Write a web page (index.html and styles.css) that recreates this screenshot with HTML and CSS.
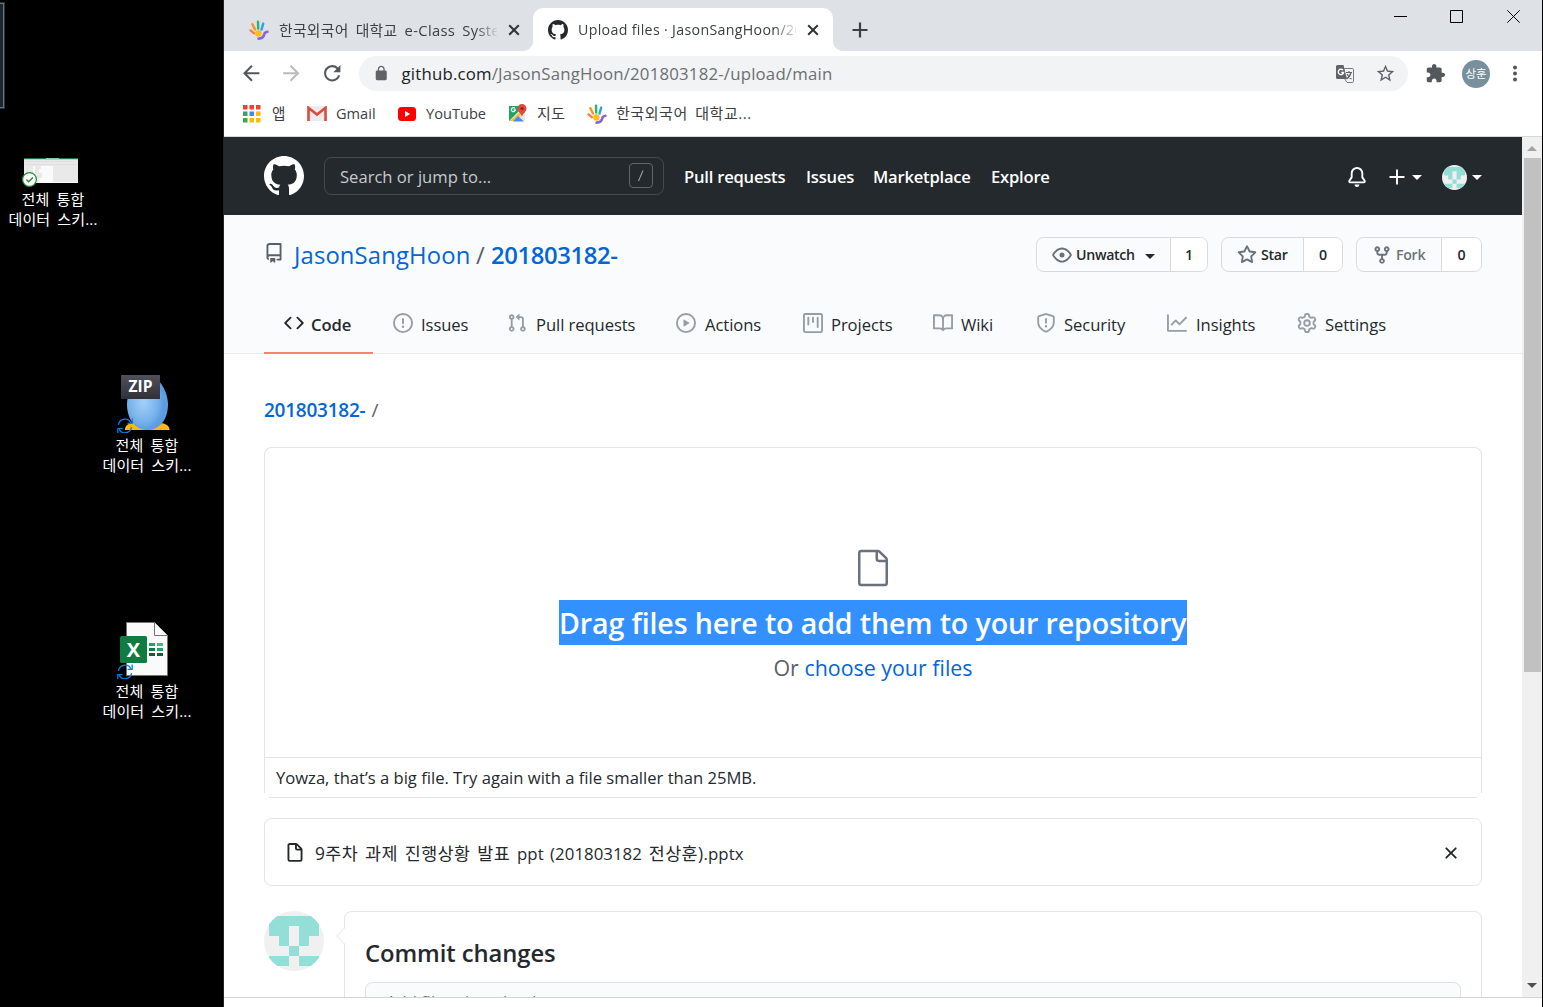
FILE: index.html
```html
<!DOCTYPE html>
<html lang="ko">
<head>
<meta charset="utf-8">
<title>Upload files · JasonSangHoon/201803182-</title>
<link rel="stylesheet" href="styles.css">
</head>
<body>
<svg class="sprite" aria-hidden="true">
  <symbol id="github" viewBox="0 0 16 16"><path fill-rule="evenodd" d="M8 0C3.58 0 0 3.58 0 8c0 3.54 2.29 6.53 5.47 7.59.4.07.55-.17.55-.38 0-.19-.01-.82-.01-1.49-2.01.37-2.53-.49-2.69-.94-.09-.23-.48-.94-.82-1.13-.28-.15-.68-.52-.01-.53.63-.01 1.08.58 1.23.82.72 1.21 1.87.87 2.33.66.07-.52.28-.87.51-1.07-1.78-.2-3.64-.89-3.64-3.95 0-.87.31-1.59.82-2.15-.08-.2-.36-1.02.08-2.12 0 0 .67-.21 2.2.82.64-.18 1.32-.27 2-.27.68 0 1.36.09 2 .27 1.53-1.04 2.2-.82 2.2-.82.44 1.1.16 1.92.08 2.12.51.56.82 1.27.82 2.15 0 3.07-1.87 3.75-3.65 3.95.29.25.54.73.54 1.48 0 1.07-.01 1.93-.01 2.2 0 .21.15.46.55.38A8.013 8.013 0 0016 8c0-4.42-3.58-8-8-8z"/></symbol>
  <symbol id="repo" viewBox="0 0 16 16"><path fill-rule="evenodd" d="M2 2.5A2.5 2.5 0 014.5 0h8.75a.75.75 0 01.75.75v12.5a.75.75 0 01-.75.75h-2.5a.75.75 0 110-1.5h1.75v-2h-8a1 1 0 00-.714 1.7.75.75 0 01-1.072 1.05A2.495 2.495 0 012 11.5v-9zm10.5-1V9h-8c-.356 0-.694.074-1 .208V2.5a1 1 0 011-1h8zM5 12.25v3.25a.25.25 0 00.4.2l1.45-1.087a.25.25 0 01.3 0L8.6 15.7a.25.25 0 00.4-.2v-3.25a.25.25 0 00-.25-.25h-3.5a.25.25 0 00-.25.25z"/></symbol>
  <symbol id="code" viewBox="0 0 16 16"><path fill-rule="evenodd" d="M4.72 3.22a.75.75 0 011.06 1.06L2.06 8l3.72 3.72a.75.75 0 11-1.06 1.06L.47 8.53a.75.75 0 010-1.06l4.25-4.25zm6.56 0a.75.75 0 10-1.06 1.06L13.94 8l-3.72 3.72a.75.75 0 101.06 1.06l4.25-4.25a.75.75 0 000-1.06l-4.25-4.25z"/></symbol>
  <symbol id="issue" viewBox="0 0 16 16"><path fill-rule="evenodd" d="M8 1.5a6.5 6.5 0 100 13 6.5 6.5 0 000-13zM0 8a8 8 0 1116 0A8 8 0 010 8zm9 3a1 1 0 11-2 0 1 1 0 012 0zm-.25-6.25a.75.75 0 00-1.5 0v3.5a.75.75 0 001.5 0v-3.5z"/></symbol>
  <symbol id="pull" viewBox="0 0 16 16"><path fill-rule="evenodd" d="M7.177 3.073L9.573.677A.25.25 0 0110 .854v4.792a.25.25 0 01-.427.177L7.177 3.427a.25.25 0 010-.354zM3.75 2.5a.75.75 0 100 1.5.75.75 0 000-1.5zm-2.25.75a2.25 2.25 0 113 2.122v5.256a2.251 2.251 0 11-1.5 0V5.372A2.25 2.25 0 011.5 3.25zM11 2.5h-1V4h1a1 1 0 011 1v5.628a2.251 2.251 0 101.5 0V5A2.5 2.5 0 0011 2.5zm1 10.25a.75.75 0 111.5 0 .75.75 0 01-1.5 0zM3.75 12a.75.75 0 100 1.5.75.75 0 000-1.5z"/></symbol>
  <symbol id="play" viewBox="0 0 16 16"><path fill-rule="evenodd" d="M1.5 8a6.5 6.5 0 1113 0 6.5 6.5 0 01-13 0zM8 0a8 8 0 100 16A8 8 0 008 0zM6.379 5.227A.25.25 0 006 5.442v5.117a.25.25 0 00.379.214l4.264-2.559a.25.25 0 000-.428L6.379 5.227z"/></symbol>
  <symbol id="project" viewBox="0 0 16 16"><path fill-rule="evenodd" d="M1.75 0A1.75 1.75 0 000 1.75v12.5C0 15.216.784 16 1.75 16h12.5A1.75 1.75 0 0016 14.25V1.75A1.75 1.75 0 0014.25 0H1.75zM1.5 1.75a.25.25 0 01.25-.25h12.5a.25.25 0 01.25.25v12.5a.25.25 0 01-.25.25H1.75a.25.25 0 01-.25-.25V1.75zM11.75 3a.75.75 0 00-.75.75v7.5a.75.75 0 001.5 0v-7.5a.75.75 0 00-.75-.75zm-8.25.75a.75.75 0 011.5 0v5.5a.75.75 0 01-1.5 0v-5.5zM8 3a.75.75 0 00-.75.75v3.5a.75.75 0 001.5 0v-3.5A.75.75 0 008 3z"/></symbol>
  <symbol id="book" viewBox="0 0 16 16"><path fill-rule="evenodd" d="M0 1.75A.75.75 0 01.75 1h4.253c1.227 0 2.317.59 3 1.501A3.744 3.744 0 0111.006 1h4.245a.75.75 0 01.75.75v10.5a.75.75 0 01-.75.75h-4.507a2.25 2.25 0 00-1.591.659l-.622.621a.75.75 0 01-1.06 0l-.622-.621A2.25 2.25 0 005.258 13H.75a.75.75 0 01-.75-.75V1.75zm8.755 3a2.25 2.25 0 012.25-2.25H14.5v9h-3.757c-.71 0-1.4.201-1.992.572l.004-7.322zm-1.504 7.324l.004-5.073-.002-2.253A2.25 2.25 0 005.003 2.5H1.5v9h3.757a3.75 3.75 0 011.994.574z"/></symbol>
  <symbol id="shield" viewBox="0 0 16 16"><path fill-rule="evenodd" d="M7.467.133a1.75 1.75 0 011.066 0l5.25 1.68A1.75 1.75 0 0115 3.48V7c0 1.566-.32 3.182-1.303 4.682-.983 1.498-2.585 2.813-5.032 3.855a1.7 1.7 0 01-1.33 0c-2.447-1.042-4.049-2.357-5.032-3.855C1.32 10.182 1 8.566 1 7V3.48a1.75 1.75 0 011.217-1.667l5.25-1.68zm.61 1.429a.25.25 0 00-.153 0l-5.25 1.68a.25.25 0 00-.174.238V7c0 1.358.275 2.666 1.057 3.86.784 1.194 2.121 2.34 4.366 3.297a.2.2 0 00.154 0c2.245-.956 3.582-2.104 4.366-3.298C13.225 9.666 13.5 8.36 13.5 7V3.48a.25.25 0 00-.174-.237l-5.25-1.68zM9 10.5a1 1 0 11-2 0 1 1 0 012 0zm-.25-5.75a.75.75 0 10-1.5 0v3a.75.75 0 001.5 0v-3z"/></symbol>
  <symbol id="graph" viewBox="0 0 16 16"><path fill-rule="evenodd" d="M1.5 1.75a.75.75 0 00-1.5 0v12.5c0 .414.336.75.75.75h14.5a.75.75 0 000-1.5H1.5V1.75zm14.28 2.53a.75.75 0 00-1.06-1.06L10 7.94 7.53 5.47a.75.75 0 00-1.06 0L3.22 8.72a.75.75 0 001.06 1.06L7 7.06l2.47 2.47a.75.75 0 001.06 0l5.25-5.25z"/></symbol>
  <symbol id="gear" viewBox="0 0 16 16"><path fill-rule="evenodd" d="M7.429 1.525a6.593 6.593 0 011.142 0c.036.003.108.036.137.146l.289 1.105c.147.56.55.967.997 1.189.174.086.341.183.501.29.417.278.97.423 1.53.27l1.102-.303c.11-.03.175.016.195.046.219.31.41.641.573.989.014.031.022.11-.059.19l-.815.806c-.411.406-.562.957-.53 1.456a4.588 4.588 0 010 .582c-.032.499.119 1.05.53 1.456l.815.806c.08.08.073.159.059.19a6.494 6.494 0 01-.573.99c-.02.029-.086.074-.195.045l-1.103-.303c-.559-.153-1.112-.008-1.529.27-.16.107-.327.204-.5.29-.449.222-.851.628-.998 1.189l-.289 1.105c-.029.11-.101.143-.137.146a6.613 6.613 0 01-1.142 0c-.036-.003-.108-.037-.137-.146l-.289-1.105c-.147-.56-.55-.967-.997-1.189a4.502 4.502 0 01-.501-.29c-.417-.278-.97-.423-1.53-.27l-1.102.303c-.11.03-.175-.016-.195-.046a6.492 6.492 0 01-.573-.989c-.014-.031-.022-.11.059-.19l.815-.806c.411-.406.562-.957.53-1.456a4.587 4.587 0 010-.582c.032-.499-.119-1.05-.53-1.456l-.815-.806c-.08-.08-.073-.159-.059-.19a6.44 6.44 0 01.573-.99c.02-.029.086-.075.195-.045l1.103.303c.559.153 1.112.008 1.529-.27.16-.107.327-.204.5-.29.449-.222.851-.628.998-1.189l.289-1.105c.029-.11.101-.143.137-.146zM8 0c-.236 0-.47.01-.701.03-.743.065-1.29.615-1.458 1.261l-.29 1.106c-.017.066-.078.158-.211.224a5.994 5.994 0 00-.668.386c-.123.082-.233.09-.3.071L3.27 2.776c-.644-.177-1.392.02-1.82.63a7.977 7.977 0 00-.704 1.217c-.315.675-.111 1.422.363 1.891l.815.806c.05.048.098.147.088.294a6.084 6.084 0 000 .772c.01.147-.038.246-.088.294l-.815.806c-.474.469-.678 1.216-.363 1.891.2.428.436.835.704 1.218.428.609 1.176.806 1.82.63l1.103-.303c.066-.019.176-.011.299.071.213.143.436.272.668.386.133.066.194.158.212.224l.289 1.106c.169.646.715 1.196 1.458 1.26a8.094 8.094 0 001.402 0c.743-.064 1.29-.614 1.458-1.26l.29-1.106c.017-.066.078-.158.211-.224a5.98 5.98 0 00.668-.386c.123-.082.233-.09.3-.071l1.102.302c.644.177 1.392-.02 1.82-.63.268-.382.505-.789.704-1.217.315-.675.111-1.422-.364-1.891l-.814-.806c-.05-.048-.098-.147-.088-.294a6.1 6.1 0 000-.772c-.01-.147.039-.246.088-.294l.814-.806c.475-.469.679-1.216.364-1.891a7.992 7.992 0 00-.704-1.218c-.428-.609-1.176-.806-1.82-.63l-1.103.303c-.066.019-.176.011-.299-.071a5.991 5.991 0 00-.668-.386c-.133-.066-.194-.158-.212-.224L10.16 1.29C9.99.645 9.444.095 8.701.031A8.094 8.094 0 008 0zm1.5 8a1.5 1.5 0 11-3 0 1.5 1.5 0 013 0zM11 8a3 3 0 11-6 0 3 3 0 016 0z"/></symbol>
  <symbol id="eye" viewBox="0 0 16 16"><path fill-rule="evenodd" d="M1.679 7.932c.412-.621 1.242-1.75 2.366-2.717C5.175 4.242 6.527 3.5 8 3.5c1.473 0 2.824.742 3.955 1.715 1.124.967 1.954 2.096 2.366 2.717a.119.119 0 010 .136c-.412.621-1.242 1.75-2.366 2.717C10.825 11.758 9.473 12.5 8 12.5c-1.473 0-2.824-.742-3.955-1.715C2.92 9.818 2.09 8.69 1.679 8.068a.119.119 0 010-.136zM8 2c-1.981 0-3.67.992-4.933 2.078C1.797 5.169.88 6.423.43 7.1a1.619 1.619 0 000 1.798c.45.678 1.367 1.932 2.637 3.024C4.329 13.008 6.019 14 8 14c1.981 0 3.67-.992 4.933-2.078 1.27-1.091 2.187-2.345 2.637-3.023a1.619 1.619 0 000-1.798c-.45-.678-1.367-1.932-2.637-3.023C11.671 2.992 9.981 2 8 2zm0 8a2 2 0 100-4 2 2 0 000 4z"/></symbol>
  <symbol id="star" viewBox="0 0 16 16"><path fill-rule="evenodd" d="M8 .25a.75.75 0 01.673.418l1.882 3.815 4.21.612a.75.75 0 01.416 1.279l-3.046 2.97.719 4.192a.75.75 0 01-1.088.791L8 12.347l-3.766 1.98a.75.75 0 01-1.088-.79l.72-4.194L.818 6.374a.75.75 0 01.416-1.28l4.21-.611L7.327.668A.75.75 0 018 .25zm0 2.445L6.615 5.5a.75.75 0 01-.564.41l-3.097.45 2.24 2.184a.75.75 0 01.216.664l-.528 3.084 2.769-1.456a.75.75 0 01.698 0l2.77 1.456-.53-3.084a.75.75 0 01.216-.664l2.24-2.183-3.096-.45a.75.75 0 01-.564-.41L8 2.694v.001z"/></symbol>
  <symbol id="fork" viewBox="0 0 16 16"><path fill-rule="evenodd" d="M5 3.25a.75.75 0 11-1.5 0 .75.75 0 011.5 0zm0 2.122a2.25 2.25 0 10-1.5 0v.878A2.25 2.25 0 005.75 8.5h1.5v2.128a2.251 2.251 0 101.5 0V8.5h1.5a2.25 2.25 0 002.25-2.25v-.878a2.25 2.25 0 10-1.5 0v.878a.75.75 0 01-.75.75h-4.5A.75.75 0 015 6.25v-.878zm3.75 7.378a.75.75 0 11-1.5 0 .75.75 0 011.5 0zm3-8.75a.75.75 0 100-1.5.75.75 0 000 1.5z"/></symbol>
  <symbol id="bell" viewBox="0 0 16 16"><path d="M8 16a2 2 0 001.985-1.75c.017-.137-.097-.25-.235-.25h-3.5c-.138 0-.252.113-.235.25A2 2 0 008 16z"/><path fill-rule="evenodd" d="M8 1.5A3.5 3.5 0 004.5 5v2.947c0 .346-.102.683-.294.97l-1.703 2.556a.018.018 0 00-.003.01l.001.006c0 .002.002.004.004.006a.017.017 0 00.006.004l.007.001h10.964l.007-.001a.016.016 0 00.006-.004.016.016 0 00.004-.006l.001-.007a.017.017 0 00-.003-.01l-1.703-2.554a1.75 1.75 0 01-.294-.97V5A3.5 3.5 0 008 1.5zM3 5a5 5 0 0110 0v2.947c0 .05.015.098.042.139l1.703 2.555A1.518 1.518 0 0113.482 13H2.518a1.518 1.518 0 01-1.263-2.36l1.703-2.554A.25.25 0 003 7.947V5z"/></symbol>
  <symbol id="file" viewBox="0 0 16 16"><path fill-rule="evenodd" d="M3.75 1.5a.25.25 0 00-.25.25v11.5c0 .138.112.25.25.25h8.5a.25.25 0 00.25-.25V6H9.75A1.75 1.75 0 018 4.25V1.5H3.75zm5.75.56v2.19c0 .138.112.25.25.25h2.19L9.5 2.06zM2 1.75C2 .784 2.784 0 3.75 0h5.086c.464 0 .909.184 1.237.513l3.414 3.414c.329.328.513.773.513 1.237v8.086A1.75 1.75 0 0112.25 15h-8.5A1.75 1.75 0 012 13.25V1.75z"/></symbol>
  <symbol id="file-lg" viewBox="0 0 24 24"><path fill-rule="evenodd" d="M5 2.5a.5.5 0 00-.5.5v18a.5.5 0 00.5.5h14a.5.5 0 00.5-.5V8.5h-4a2 2 0 01-2-2v-4H5zm10 0v4a.5.5 0 00.5.5h4a.5.5 0 00-.146-.336l-4.018-4.018A.5.5 0 0015 2.5zM3 3a2 2 0 012-2h9.982a2 2 0 011.414.586l4.018 4.018A2 2 0 0121 7.018V21a2 2 0 01-2 2H5a2 2 0 01-2-2V3z"/></symbol>
  <symbol id="x" viewBox="0 0 16 16"><path fill-rule="evenodd" d="M3.72 3.72a.75.75 0 011.06 0L8 6.94l3.22-3.22a.75.75 0 111.06 1.06L9.06 8l3.22 3.22a.75.75 0 11-1.06 1.06L8 9.06l-3.22 3.22a.75.75 0 01-1.06-1.06L6.94 8 3.72 4.78a.75.75 0 010-1.06z"/></symbol>
  <symbol id="tab-x" viewBox="0 0 12 12"><path fill="none" stroke="currentColor" stroke-width="2" d="M1.2 1.2l9.6 9.6M10.8 1.2l-9.6 9.6"/></symbol>
  <symbol id="back" viewBox="0 0 24 24"><path d="M20 11H7.83l5.59-5.59L12 4l-8 8 8 8 1.41-1.41L7.83 13H20v-2z"/></symbol>
  <symbol id="reload" viewBox="0 0 24 24"><path d="M17.65 6.35A7.958 7.958 0 0012 4c-4.42 0-7.99 3.58-7.99 8s3.57 8 7.99 8c3.73 0 6.84-2.55 7.73-6h-2.08A5.99 5.99 0 0112 18c-3.31 0-6-2.69-6-6s2.69-6 6-6c1.66 0 3.14.69 4.22 1.78L13 11h7V4l-2.35 2.35z"/></symbol>
  <symbol id="lock" viewBox="0 0 24 24"><path fill-rule="evenodd" d="M18 8h-1V6c0-2.76-2.24-5-5-5S7 3.24 7 6v2H6c-1.1 0-2 .9-2 2v10c0 1.1.9 2 2 2h12c1.1 0 2-.9 2-2V10c0-1.1-.9-2-2-2zM15.1 8H8.9V6c0-1.71 1.39-3.1 3.1-3.1s3.1 1.39 3.1 3.1v2z"/></symbol>
  <symbol id="bookmark" viewBox="0 0 24 24"><path fill-rule="evenodd" d="M22 9.24l-7.19-.62L12 2 9.19 8.63 2 9.24l5.46 4.73L5.82 21 12 17.27 18.18 21l-1.63-7.03L22 9.24zM12 15.4l-3.76 2.27 1-4.28-3.32-2.88 4.38-.38L12 6.1l1.71 4.04 4.38.38-3.32 2.88 1 4.28L12 15.4z"/></symbol>
  <symbol id="puzzle" viewBox="0 0 24 24"><path d="M20.5 11H19V7c0-1.1-.9-2-2-2h-4V3.5C13 2.12 11.88 1 10.5 1S8 2.12 8 3.5V5H4c-1.1 0-1.99.9-1.99 2v3.8H3.5c1.49 0 2.7 1.21 2.7 2.7s-1.21 2.7-2.7 2.7H2V20c0 1.1.9 2 2 2h3.8v-1.5c0-1.49 1.21-2.7 2.7-2.7 1.49 0 2.7 1.21 2.7 2.7V22H17c1.1 0 2-.9 2-2v-4h1.5c1.38 0 2.5-1.12 2.5-2.5S21.88 11 20.5 11z"/></symbol>
  <symbol id="hand" viewBox="0 0 20 20">
    <g fill="none" stroke-linecap="round" stroke-width="2.4">
      <path stroke="#f7941d" d="M3.4 4.200L6 9.600"/><path stroke="#ff7a3d" d="M1.600 10.400l3.200 2.800"/>
      <path stroke="#2bb56a" d="M9 1.600l.2 7"/><path stroke="#2ea0ef" d="M14.200 3.600l-1.700 6"/>
      <path stroke="#8a63d8" stroke-width="2.600" d="M18.400 11.800c-2.200.2-3 1.200-3.200 2.800-.6 2.200-2.400 3.900-5.600 4"/>
    </g>
    <circle cx="9.400" cy="13.500" r="3.200" fill="#fbc012"/>
  </symbol>
  <symbol id="identicon" viewBox="0 0 60 60"><path fill="#f0f0f0" d="M0 0h60v60H0z"/><path fill="#93dfd7" d="M5 5h50v20H45v10H35V15H25v20H15V25H5zM25 35h10v10H25zM5 45h20v10H5zM35 45h20v10H35z"/></symbol>
  <symbol id="sync" viewBox="0 0 16 16"><g fill="none" stroke="#0f7bd8" stroke-width="1.300"><path d="M1.500 6.800A6.600 6.600 0 0 1 14 5M14.500 9.200A6.600 6.600 0 0 1 2 11"/><path d="M15.200.5v4.800h-4.700M.8 15.500v-4.800h4.700"/></g></symbol>
</svg>

<main class="screen">
  <section class="desktop">
    <div class="edge-item"></div>
    <figure class="shortcut shortcut-sheet">
      <svg class="art" width="60" height="60" viewBox="0 0 60 60">
        <rect x="4" y="28" width="54" height="25" fill="#e9e9e9"/><rect x="4" y="28" width="54" height="1.200" fill="#217346"/><rect x="26" y="28" width="13" height="1.200" fill="#8fc7a6"/>
        <path fill="#fafafa" d="M21 36h12v16H19v-4h3v-5h-3v-4h2zM13 36h2v16h-2zM4 52h54v1H4z"/><path stroke="#e0e0e0" d="M5 31.500h48M5 34.500h52"/>
        <circle cx="9.500" cy="49.500" r="6.900" fill="#fff" stroke="#228b34" stroke-width="1.200"/><path d="M6.300 49.600l2.300 2.200 4.300-4.400" fill="none" stroke="#228b34" stroke-width="1.400"/>
      </svg>
      <figcaption>전체 통합<br>데이터 스키...</figcaption>
    </figure>
    <figure class="shortcut shortcut-zip">
      <svg class="art" width="60" height="60" viewBox="0 0 60 60">
        <defs>
          <radialGradient id="egg" cx=".4" cy=".5"><stop offset="0" stop-color="#a4d0f6"/><stop offset=".7" stop-color="#78b2ec"/><stop offset="1" stop-color="#5b9de0"/></radialGradient>
          <linearGradient id="plate" x2="0" y2="1"><stop offset="0" stop-color="#4f505a"/><stop offset="1" stop-color="#2f3038"/></linearGradient>
        </defs>
        <path fill="#fcb712" d="M11 57c-.5-4.500 4-7 9-7h26c5 0 10 3 9.500 7z"/>
        <path fill="url(#egg)" d="M33 2c12 0 21 17 21 29.500C54 47 45 57 33.500 57S13 47 13 31.500C13 19 21 2 33 2z"/>
        <rect x="7" y="2" width="39" height="24" rx=".6" fill="url(#plate)"/>
        <text x="26.500" y="18.700" class="zip-label">ZIP</text>
        <use href="#sync" x="3" y="45" width="16" height="16"/>
      </svg>
      <figcaption>전체 통합<br>데이터 스키...</figcaption>
    </figure>
    <figure class="shortcut shortcut-excel">
      <svg class="art" width="60" height="60" viewBox="0 0 60 60">
        <path fill="#fafafa" stroke="#77726f" d="M12.500 3.500h28l13 13v40h-41z"/><path fill="#fff" stroke="#77726f" d="M40.500 3.500v13h13"/>
        <rect x="6" y="17" width="27" height="27" rx="1.500" fill="#107c41"/>
        <path fill="#21a366" d="M35 24h6v3h-6z"/><path fill="#33c481" d="M43 24h6v3h-6z"/><path fill="#107c41" d="M35 29h6v3h-6z"/><path fill="#21a366" d="M43 29h6v3h-6z"/><path fill="#185c37" d="M35 34h6v3h-6zM43 34h6v3h-6z"/>
        <text x="19.500" y="38" class="excel-label">X</text>
        <use href="#sync" x="3" y="45" width="16" height="16"/>
      </svg>
      <figcaption>전체 통합<br>데이터 스키...</figcaption>
    </figure>
  </section>

  <section class="browser">
    <div class="tabstrip">
      <div class="tab">
        <svg class="i20"><use href="#hand"/></svg><span class="tab-title title-kr">한국외국어 대학교 e-Class Syste</span><svg class="tab-close"><use href="#tab-x"/></svg>
      </div>
      <div class="tab tab-active">
        <svg class="i20 ink"><use href="#github"/></svg><span class="tab-title">Upload files · JasonSangHoon/20</span><svg class="tab-close"><use href="#tab-x"/></svg>
      </div>
      <svg class="new-tab" viewBox="0 0 16 16"><path d="M8 .5v15M.5 8h15" stroke="#3c4043" stroke-width="2.200"/></svg>
      <div class="window-buttons">
        <svg width="13" height="13"><path d="M0 6.500h13" stroke="#000"/></svg>
        <svg width="13" height="13"><path d="M.5.5h12v12H.5z" fill="none" stroke="#000"/></svg>
        <svg class="win-close" width="13" height="13"><path d="M.3.3l12.400 12.400M12.700.3L.3 12.700" stroke="#000"/></svg>
      </div>
    </div>

    <div class="toolbar">
      <svg class="tool"><use href="#back"/></svg>
      <svg class="tool tool-off"><use href="#back"/></svg>
      <svg class="tool tool-reload"><use href="#reload"/></svg>
      <div class="omnibox">
        <svg class="lock"><use href="#lock"/></svg>
        <span class="url"><b>github.com</b>/JasonSangHoon/201803182-/upload/main</span>
        <svg class="translate" viewBox="0 0 18 18"><path fill="#5f6368" d="M1.500 0h6l3.500 14H1.500A1.500 1.500 0 0 1 0 12.500v-11A1.500 1.500 0 0 1 1.500 0z"/><path fill="none" stroke="#777b80" d="M8.200 3.500h8a1.300 1.300 0 0 1 1.300 1.300v11.400a1.300 1.300 0 0 1-1.300 1.300H11L8.800 14"/><path fill="none" stroke="#fff" stroke-width="1.300" d="M7 5.200A2.700 2.700 0 1 0 7.600 7.500H5.300"/><path fill="none" stroke="#5f6368" stroke-width="1.200" d="M10 7.500h6M13 6v1.500M15 7.500c-.6 2.800-2.200 5-4.500 6.500M11.200 9c.8 2 2.200 4 4.300 5"/></svg>
        <svg class="bookmark"><use href="#bookmark"/></svg>
      </div>
      <svg class="puzzle"><use href="#puzzle"/></svg>
      <span class="profile">상훈</span>
      <svg class="kebab" viewBox="0 0 4 16"><circle cx="2" cy="2" r="2"/><circle cx="2" cy="8" r="2"/><circle cx="2" cy="14" r="2"/></svg>
    </div>

    <div class="bookmarks">
      <span class="bm bm-apps"><svg width="18" height="18" viewBox="0 0 18 18"><path fill="#ea4335" d="M0 0h4.500v4.500H0zM6.500 0H11v4.500H6.500zM13 0h4.500v4.500H13z"/><path fill="#34a853" d="M0 6.500h4.500V11H0zM0 13h4.500v4.500H0z"/><path fill="#4285f4" d="M6.500 6.500H11V11H6.500z"/><path fill="#fbbc05" d="M13 6.500h4.500V11H13zM13 13h4.500v4.500H13zM6.500 13H11v4.500H6.500z"/></svg><b>앱</b></span>
      <span class="bm bm-gmail"><svg width="20" height="15" viewBox="0 0 20 15"><rect width="20" height="15" rx="1.500" fill="#ececec"/><path fill="none" stroke="#dd4b3e" stroke-width="2.600" d="M1.500 15V1.800L10 8.600l8.500-6.800V15"/></svg><b>Gmail</b></span>
      <span class="bm bm-youtube"><svg width="18" height="14" viewBox="0 0 18 14"><rect width="18" height="14" rx="3.500" fill="#f00"/><path fill="#fff" d="M7 4l5.200 3L7 10z"/></svg><b>YouTube</b></span>
      <span class="bm bm-maps"><svg width="19" height="19" viewBox="0 0 19 19"><path fill="#1fa463" d="M1 2h16v15H1z"/><path fill="#e6e6e6" d="M1 17L13 5l4 4v8z"/><path fill="#fbc02d" d="M2 17L14 6l2 2-9 9z"/><path fill="#4a89f3" d="M5 17.500l5-5.500 6 5.500z"/><path fill="none" stroke="#fff" stroke-width="1.200" d="M7 4.500a2 2 0 1 0 .3 1.700H5.500"/><path fill="#df4b3f" d="M14 0a4.500 4.500 0 0 0-4.500 4.500C9.500 8 13 8.500 14 13c1-4.500 4.500-5 4.500-8.500A4.500 4.500 0 0 0 14 0z"/><circle cx="14" cy="4.500" r="1.600" fill="#7b2a22"/></svg><b>지도</b></span>
      <span class="bm bm-hufs"><svg width="20" height="20"><use href="#hand"/></svg><b>한국외국어 대학교...</b></span>
    </div>

    <div class="viewport">
      <div class="page">
        <header class="gh-header">
          <svg class="gh-logo"><use href="#github"/></svg>
          <div class="gh-search"><span>Search or jump to...</span><svg class="slash-key" viewBox="0 0 24 25"><rect x=".5" y=".5" width="23" height="24" rx="3.500" fill="none" stroke="#5f656b"/><path d="M9.500 18L14 7.500" stroke="#9a9fa4" stroke-width="1.100"/></svg></div>
          <nav class="gh-nav"><a class="n1">Pull requests</a><a class="n2">Issues</a><a class="n3">Marketplace</a><a class="n4">Explore</a></nav>
          <div class="gh-user">
            <svg class="i20"><use href="#bell"/></svg>
            <svg class="plus" width="16" height="16"><path d="M8 .5v15M.5 8h15" stroke="#fff" stroke-width="1.900"/></svg><i class="caret"></i>
            <svg class="avatar-sm"><use href="#identicon"/></svg><i class="caret"></i>
          </div>
        </header>

        <section class="repo-head">
          <div class="repo-top">
            <svg class="i20 repo-icon"><use href="#repo"/></svg>
            <h1><a class="owner">JasonSangHoon</a><span class="sep">/</span><a class="name">201803182-</a></h1>
            <div class="actions">
              <div class="btn b-watch"><span class="lab"><svg class="i20"><use href="#eye"/></svg>Unwatch<i class="caret"></i></span><span class="count">1</span></div>
              <div class="btn b-star"><span class="lab"><svg class="i20"><use href="#star"/></svg>Star</span><span class="count">0</span></div>
              <div class="btn b-fork"><span class="lab"><svg class="i20"><use href="#fork"/></svg>Fork</span><span class="count">0</span></div>
            </div>
          </div>
          <nav class="repo-nav">
            <a class="on t1"><svg class="i20"><use href="#code"/></svg>Code</a>
            <a class="t2"><svg class="i20"><use href="#issue"/></svg>Issues</a>
            <a class="t3"><svg class="i20"><use href="#pull"/></svg>Pull requests</a>
            <a class="t4"><svg class="i20"><use href="#play"/></svg>Actions</a>
            <a class="t5"><svg class="i20"><use href="#project"/></svg>Projects</a>
            <a class="t6"><svg class="i20"><use href="#book"/></svg>Wiki</a>
            <a class="t7"><svg class="i20"><use href="#shield"/></svg>Security</a>
            <a class="t8"><svg class="i20"><use href="#graph"/></svg>Insights</a>
            <a class="t9"><svg class="i20"><use href="#gear"/></svg>Settings</a>
          </nav>
        </section>

        <section class="content">
          <div class="crumb"><a>201803182-</a><span>/</span></div>
          <div class="drop">
            <svg class="drop-icon"><use href="#file-lg"/></svg>
            <h2><mark>Drag files here to add them to your repository</mark></h2>
            <p>Or <a>choose your files</a></p>
          </div>
          <div class="error"><span>Yowza, that’s a big file. Try again with a file smaller than 25MB.</span></div>
          <div class="file-row"><svg class="i20"><use href="#file"/></svg><span>9주차 과제 진행상황 발표 <em>ppt (201803182</em> 전상훈)<em>.pptx</em></span><svg class="i20 remove"><use href="#x"/></svg></div>
          <div class="commit">
            <svg class="avatar-lg"><use href="#identicon"/></svg>
            <div class="commit-box"><svg class="pointer" viewBox="0 0 9 18"><path fill="#fff" stroke="#e1e4e8" d="M9 .5L.7 9 9 17.500"/></svg><h3>Commit changes</h3><div class="field">Add files via upload</div></div>
          </div>
        </section>
      </div>
      <div class="scrollbar"><i class="up"></i><i class="thumb"></i><i class="down"></i></div>
    </div>
  </section>
</main>
</body>
</html>
```
FILE: styles.css
```css
* { box-sizing: border-box; }
body, h1, h2, h3, p, figure { margin: 0; }
body {
  background: #000;
  color: #24292e;
  font-family: "Open Sans", "Noto Sans CJK KR", sans-serif;
  font-size: 16.6px;
  line-height: 24px;
  overflow: hidden;
}
svg { display: block; flex: none; fill: currentColor; }
i { display: block; flex: none; }
.sprite { position: absolute; width: 0; height: 0; }
.i20 { width: 20px; height: 20px; }
.ink { color: #24292e; }
.screen { display: flex; width: 1543px; height: 1007px; white-space: nowrap; }

/* Desktop */
.desktop { position: relative; width: 224px; border-right: 1px solid #222; color: #fff; }
.edge-item { position: absolute; left: -10px; top: 2px; width: 15px; height: 107px; background: #1c262d; border: 1px solid #27333b; box-shadow: inset 0 0 0 1px #68757d; }
.shortcut { position: absolute; width: 100px; font-size: 15px; line-height: 20px; text-align: center; }
.art { margin-left: 17px; }
.shortcut figcaption { margin-top: 2px; letter-spacing: 0.15px; word-spacing: 3px; }
.shortcut-sheet { left: 3px; top: 130px; }
.shortcut-sheet figcaption { margin-top: -1px; }
.shortcut-zip { left: 97px; top: 373px; }
.shortcut-excel { left: 97px; top: 619px; }
.zip-label { font: 700 15.500px "Open Sans", sans-serif; fill: #fff; text-anchor: middle; }
.excel-label { font: 700 20px "Open Sans", sans-serif; fill: #fff; text-anchor: middle; }

/* Browser chrome */
.browser { display: flex; flex-direction: column; width: 1318px; background: #fff; }
.tabstrip { display: flex; height: 51px; background: #dee1e6; padding: 8px 22px 0 9px; }
.tab { position: relative; display: flex; align-items: center; width: 300px; height: 43px; padding: 0 13px 0 16px; font-size: 14.2px; color: #3c4043; }
.tab-active { padding: 0 14px 0 15px; background: #fff; border-radius: 10px 10px 0 0; }
.tab-active::before, .tab-active::after { content: ""; position: absolute; bottom: 0; width: 10px; height: 10px; }
.tab-active::before { left: -10px; background: radial-gradient(circle at 0 0, #dee1e6 9.500px, #fff 10.500px); }
.tab-active::after { right: -10px; background: radial-gradient(circle at 100% 0, #dee1e6 9.500px, #fff 10.500px); }
.tab-title { flex: none; width: 218px; margin-left: 10px; overflow: hidden; letter-spacing: 0.33px; mask-image: linear-gradient(to right, #000 90%, transparent 101%); }
.title-kr { font-size: 14.800px; letter-spacing: 0.3px; word-spacing: 3px; }
.tab-close { width: 12px; height: 12px; margin-left: auto; color: #303336; }
.new-tab { width: 16px; height: 16px; margin: 14px 0 0 19px; }
.window-buttons { display: flex; gap: 43px; margin: 2px 0 0 auto; }
.win-close { margin-left: 1px; }
.toolbar { display: flex; align-items: center; height: 45px; padding: 0 0 0 15px; color: #54585d; }
.tool { width: 24.500px; height: 24.500px; margin-right: 15.500px; }
.tool-off { color: #babcbe; transform: scaleX(-1); }
.tool-reload { margin: 0 14.500px 0 1px; }
.omnibox { display: flex; align-items: center; width: 1049px; height: 35px; border-radius: 18px; background: #f1f3f4; padding: 0 12px 0 14px; color: #5f6368; }
.lock { width: 16.500px; height: 16.500px; }
.url { margin-left: 12px; font-size: 16.800px; letter-spacing: 0.2px; color: #6b6f73; }
.url b { font-weight: 400; color: #202124; }
.translate { width: 18px; height: 18px; margin-left: auto; }
.bookmark { width: 21px; height: 21px; margin-left: 21px; }
.puzzle { width: 21px; height: 21px; margin-left: 17px; }
.profile { display: flex; align-items: center; justify-content: center; width: 28px; height: 28px; margin-left: 16px; border-radius: 50%; background: #78909c; color: #fff; font-size: 11.500px; }
.kebab { width: 4px; height: 17px; margin-left: 23px; }
.bookmarks { display: flex; height: 41px; border-bottom: 1px solid #d5d7da; padding: 0 0 5px 19px; color: #3c4043; font-size: 14.600px; }
.bm { display: flex; align-items: center; gap: 10px; flex: none; }
.bm b { margin-top: -2px; font-weight: 400; }
.bm-apps { width: 64px; gap: 11px; }
.bm-gmail { width: 91px; gap: 9px; }
.bm-youtube { width: 110px; }
.bm-maps { width: 79px; font-size: 15px; letter-spacing: 0.4px; }
.bm-hufs { gap: 9px; font-size: 15px; letter-spacing: 0.55px; word-spacing: 3px; }

/* Page frame */
.viewport { display: flex; height: 861px; border-bottom: 1px solid #d4d4d6; overflow: hidden; }
.page { width: 1298px; overflow: hidden; }
.scrollbar { display: flex; flex-direction: column; align-items: center; width: 20px; background: #f0f0f0; }
.up { width: 0; border: 5px solid transparent; border-top: 0; border-bottom: 5px solid #a3a3a3; margin: 9px 0 7px; }
.thumb { width: 17px; height: 514px; background: #c1c1c1; }
.down { width: 0; border: 5px solid transparent; border-bottom: 0; border-top: 5px solid #505050; margin: auto 0 9px; }
.caret { width: 0; border: 5px solid transparent; border-bottom: 0; border-top-color: currentColor; }

/* GitHub header */
.gh-header { display: flex; align-items: center; height: 78px; padding: 0 40px; background: #24292e; color: #fff; }
.gh-logo { width: 40px; height: 40px; }
.gh-search { display: flex; align-items: center; justify-content: space-between; width: 340px; height: 38px; margin-left: 20px; padding: 0 10px 0 15px; border: 1px solid #444a50; border-radius: 7.500px; color: #c8c9cb; }
.gh-search span { margin-top: 1px; }
.slash-key { width: 24px; height: 25px; margin-top: -1px; }
.gh-nav { display: flex; margin: 1px 0 0 20px; font-weight: 600; font-size: 16.600px; letter-spacing: -0.22px; }
.n1 { width: 122px; }
.n2 { width: 67px; }
.n3 { width: 118px; }
.gh-user { display: flex; align-items: center; margin: 2px 0 0 auto; }
.plus { margin: 0 7px 0 22px; }
.avatar-sm { width: 25px; height: 25px; margin: 0 5px 0 20px; border-radius: 50%; }

/* Repository header */
.repo-head { height: 139px; background: #fafbfc; border-bottom: 1px solid #eaecef; }
.repo-top { display: flex; height: 78px; padding: 22px 40px 0; }
.repo-icon { margin-top: 6px; color: #586069; }
.repo-top h1 { display: flex; margin: 0 0 0 10px; font-size: 23.800px; line-height: 36px; font-weight: 400; }
.owner, .name { color: #0366d6; }
.owner { width: 182px; letter-spacing: 0.15px; }
.sep { width: 15px; color: #586069; }
.name { font-weight: 600; letter-spacing: -0.35px; }
.actions { display: flex; gap: 13px; margin-left: auto; }
.btn { display: flex; height: 35px; border: 1px solid #d8dade; border-radius: 7.500px; font-size: 14.200px; font-weight: 600; letter-spacing: -0.32px; overflow: hidden; }
.btn svg { margin-right: 4px; color: #6a737d; }
.lab { display: flex; align-items: center; padding-left: 15px; }
.count { display: flex; flex: 1; align-items: center; justify-content: center; background: #fff; border-left: 1px solid #d8dade; }
.lab .caret { margin: 3px 0 0 10px; }
.b-watch { width: 172px; }
.b-watch .lab { width: 133px; }
.b-star { width: 122px; }
.b-star .lab { width: 81px; }
.b-fork { width: 126px; }
.b-fork .lab { width: 84px; color: #6a737d; }
.repo-nav { display: flex; height: 61px; padding-left: 40px; }
.repo-nav a { display: flex; align-items: center; padding: 2px 0 0 20px; letter-spacing: -0.07px; }
.repo-nav a svg { margin: -3px 8px 0 0; color: #959da5; }
.repo-nav .t3 svg, .repo-nav .t4 svg, .repo-nav .t8 svg { margin-right: 9px; }
.repo-nav .on { border-bottom: 2.500px solid #f9826c; padding-top: 4px; font-weight: 600; letter-spacing: -0.1px; }
.repo-nav .on svg { margin-right: 7px; color: #24292e; }
.t1 { width: 109px; }
.t2 { width: 114px; }
.t3 { width: 169px; }
.t4 { width: 127px; }
.t5 { width: 130px; }
.t6 { width: 103px; }
.t7 { width: 131px; }
.t8 { width: 130px; }

/* Upload form */
.content { padding: 42px 40px 0; }
.crumb { display: flex; gap: 6px; height: 51px; font-size: 19px; line-height: 28px; color: #586069; }
.crumb a { color: #0366d6; font-weight: 600; letter-spacing: -0.25px; }
.drop { display: flex; flex-direction: column; align-items: center; height: 310px; padding-top: 100px; border: 1px solid #e1e4e8; border-bottom: 0; border-radius: 7.500px 7.500px 0 0; }
.drop-icon { width: 40px; height: 40px; color: #6a737d; }
.drop h2 { margin-top: 12px; font-size: 28.600px; font-weight: 600; line-height: 45px; letter-spacing: -0.14px; }
.drop mark { display: block; width: 628px; height: 45px; background: #3390ff; color: #fff; }
.drop p { margin-top: 6px; font-size: 21.400px; line-height: 34px; color: #586069; }
.drop a { color: #0366d6; }
.error { position: relative; height: 41px; padding: 7px 11px; border: 1px solid #e1e4e8; line-height: 26px; }
.error::before, .error::after { content: ""; position: absolute; bottom: -1px; width: 5px; height: 5px; background: #fff; }
.error::before { left: -1px; }
.error::after { right: -1px; }
.file-row { display: flex; align-items: center; height: 68px; margin-top: 20px; padding: 2px 20px 0; border: 1px solid #e1e4e8; border-radius: 7.500px; }
.file-row span { margin-left: 10px; font-size: 17.400px; letter-spacing: 0.4px; word-spacing: 2px; }
.file-row em { font-size: 16.800px; font-style: normal; letter-spacing: 0.05px; }
.remove { margin-left: auto; }
.commit { display: flex; margin-top: 25px; }
.avatar-lg { width: 60px; height: 60px; border-radius: 50%; }
.commit-box { position: relative; width: 1138px; height: 300px; margin-left: 20px; padding: 20px; border: 1px solid #e1e4e8; border-radius: 7.500px; }
.pointer { position: absolute; left: -9px; top: 15px; width: 9px; height: 18px; }
.commit-box h3 { font-size: 23.800px; line-height: 42px; font-weight: 600; letter-spacing: -0.07px; }
.field { height: 60px; margin-top: 8px; padding: 7px 20px; border: 1px solid #dde1e6; border-radius: 7.500px; background: #fafbfc; color: #6a737d; }
```
